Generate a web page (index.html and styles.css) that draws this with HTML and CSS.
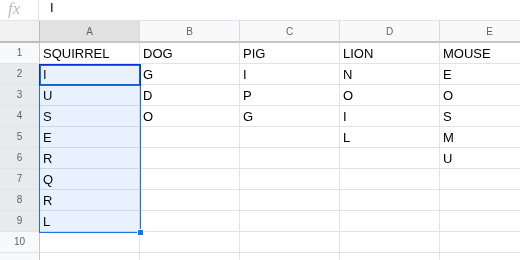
FILE: index.html
```html
<!DOCTYPE html>
<html>
<head>
<meta charset="utf-8">
<link rel="stylesheet" href="styles.css">
</head>
<body>
<div class="app">
  <div class="fbar">
    <div class="fx">fx</div>
    <div class="fval">I</div>
  </div>
  <div class="sheet">
    <div class="row head">
      <div class="rh corner"></div>
      <div class="ch sel">A</div>
      <div class="ch">B</div>
      <div class="ch">C</div>
      <div class="ch">D</div>
      <div class="ch">E</div>
    </div>
    <div class="row"><div class="rh">1</div><div class="c">SQUIRREL</div><div class="c">DOG</div><div class="c">PIG</div><div class="c">LION</div><div class="c">MOUSE</div></div>
    <div class="row"><div class="rh sel">2</div><div class="c">I</div><div class="c">G</div><div class="c">I</div><div class="c">N</div><div class="c">E</div></div>
    <div class="row"><div class="rh sel">3</div><div class="c">U</div><div class="c">D</div><div class="c">P</div><div class="c">O</div><div class="c">O</div></div>
    <div class="row"><div class="rh sel">4</div><div class="c">S</div><div class="c">O</div><div class="c">G</div><div class="c">I</div><div class="c">S</div></div>
    <div class="row"><div class="rh sel">5</div><div class="c">E</div><div class="c"></div><div class="c"></div><div class="c">L</div><div class="c">M</div></div>
    <div class="row"><div class="rh sel">6</div><div class="c">R</div><div class="c"></div><div class="c"></div><div class="c"></div><div class="c">U</div></div>
    <div class="row"><div class="rh sel">7</div><div class="c">Q</div><div class="c"></div><div class="c"></div><div class="c"></div><div class="c"></div></div>
    <div class="row"><div class="rh sel">8</div><div class="c">R</div><div class="c"></div><div class="c"></div><div class="c"></div><div class="c"></div></div>
    <div class="row"><div class="rh sel">9</div><div class="c">L</div><div class="c"></div><div class="c"></div><div class="c"></div><div class="c"></div></div>
    <div class="row"><div class="rh">10</div><div class="c"></div><div class="c"></div><div class="c"></div><div class="c"></div><div class="c"></div></div>
    <div class="row"><div class="rh"></div><div class="c"></div><div class="c"></div><div class="c"></div><div class="c"></div><div class="c"></div></div>
    <div class="range"></div>
    <div class="active"></div>
    <div class="handle"></div>
  </div>
</div>
</body>
</html>
```
FILE: styles.css
```css
html, body {
  margin: 0;
  padding: 0;
  background: #fff;
}
.app {
  width: 520px;
  height: 260px;
  overflow: hidden;
  font-family: "Liberation Sans", Arial, sans-serif;
}
.fbar {
  display: flex;
  height: 20px;
  border-bottom: 1px solid #e2e3e3;
}
.fx {
  width: 39px;
  border-right: 1px solid #e2e3e3;
  font-family: "Liberation Serif", serif;
  font-style: italic;
  font-size: 17px;
  color: #bcbcbc;
  padding-left: 8px;
  box-sizing: border-box;
  line-height: 18px;
}
.fval {
  padding-left: 11px;
  font-size: 13px;
  line-height: 16px;
  color: #000;
}
.sheet {
  position: relative;
}
.row {
  display: grid;
  grid-template-columns: 40px repeat(5, 100px);
  height: 21px;
}
.row.head {
  height: 22px;
}
.rh, .ch, .c {
  box-sizing: border-box;
  overflow: hidden;
  white-space: nowrap;
}
.rh {
  background: #f8f9fa;
  border-right: 1px solid #c4c7c5;
  border-bottom: 1px solid #e2e3e3;
  font-size: 10px;
  color: #5f6368;
  text-align: center;
  line-height: 20px;
}
.rh.sel {
  background: #e8eaed;
}
.rh.corner {
  background: #f1f1f1;
  border-right: 1px solid #bdbdbd;
  border-bottom: 2px solid #bdbdbd;
}
.ch {
  background: #f8f9fa;
  border-right: 1px solid #dadce0;
  border-bottom: 2px solid #c4c7c5;
  font-size: 10px;
  color: #5f6368;
  text-align: center;
  line-height: 21px;
}
.ch.sel {
  background: #e1e1e1;
}
.c {
  border-right: 1px solid #e2e3e3;
  border-bottom: 1px solid #e2e3e3;
  font-size: 13px;
  color: #000;
  padding-left: 3px;
  line-height: 21px;
}
.range {
  position: absolute;
  left: 39px;
  top: 43px;
  width: 102px;
  height: 169px;
  box-sizing: border-box;
  border: 1px solid #1a73e8;
  background: rgba(26, 115, 232, 0.1);
  pointer-events: none;
}
.active {
  position: absolute;
  left: 39px;
  top: 43px;
  width: 102px;
  height: 22px;
  box-sizing: border-box;
  border: 2px solid #1a73e8;
  background: #fff;
  mix-blend-mode: multiply;
}
.handle {
  position: absolute;
  left: 137px;
  top: 208px;
  width: 7px;
  height: 7px;
  box-sizing: border-box;
  background: #1a73e8;
  border: 1px solid #fff;
}
```
